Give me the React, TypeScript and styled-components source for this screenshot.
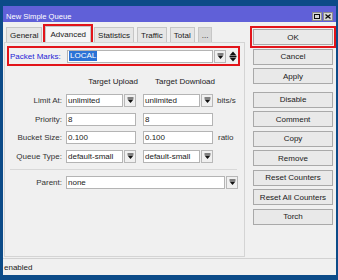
import React, {FC} from 'react';
import styled, {createGlobalStyle} from 'styled-components';

const GlobalStyle = createGlobalStyle`
  html, body {
    margin: 0;
    padding: 0;
  }
  body {
    background: #0c4b88;
    font-family: "Liberation Sans", Arial, sans-serif;
    font-size: 8px;
    color: #1a1a1a;
  }
`

const RED = '#e2141a'

const Desktop = styled.div`
  width: 338px;
  height: 280px;
  box-sizing: border-box;
  padding: 6px 2px 5px 3px;
  background: #0c4b88;
  display: flex;
`

const Window = styled.div`
  flex: 1;
  display: flex;
  flex-direction: column;
  background: #f0f0f0;
  overflow: hidden;
`

const TitleBar = styled.div`
  height: 16px;
  flex: none;
  box-sizing: border-box;
  padding: 2px 3px 0 3px;
  background: #6060d8;
  color: #fff;
  display: flex;
  align-items: center;
  justify-content: space-between;
`

const TitleText = styled.span`
  font-size: 7.6px;
  margin-top: 2px;
`

const TitleButtons = styled.div`
  display: flex;
  gap: 1px;
  margin-top: 2px;
`

const TitleButton = styled.div`
  width: 10px;
  height: 9px;
  box-sizing: border-box;
  background: #d6d6d6;
  border: 1px solid #8c8c8c;
  display: flex;
  align-items: center;
  justify-content: center;
`

const Body = styled.div`
  flex: 1;
  display: flex;
  padding: 4px 3px 1px 1px;
  gap: 8px;
  min-height: 0;
`

const LeftCol = styled.div`
  width: 241px;
  display: flex;
  flex-direction: column;
`

const Tabs = styled.div`
  height: 16px;
  display: flex;
  align-items: flex-end;
  gap: 3px;
  padding-left: 2px;
`

const Tab = styled.div<{$active?: boolean; $muted?: boolean}>`
  height: ${p => p.$active ? 16 : 15}px;
  box-sizing: border-box;
  padding: 0 ${p => p.$active ? 4 : 3}px;
  display: flex;
  align-items: center;
  background: ${p => p.$muted ? '#d8d8d8' : p.$active ? '#f6f6f6' : '#e6e6e6'};
  border: 1px solid #c6c6c6;
  border-bottom: none;
  outline: ${p => p.$active ? `2px solid ${RED}` : 'none'};
  outline-offset: 0;
`

const Panel = styled.div`
  flex: 1;
  border: 1px solid #d4d4d4;
  background: #f0f0f0;
  display: flex;
  flex-direction: column;
  padding: 3px 3px 0 2px;
`

const MarksBox = styled.div`
  height: 20px;
  box-sizing: border-box;
  border: 2px solid ${RED};
  display: flex;
  align-items: center;
  padding-left: 1px;
  margin-right: 1px;
`

const MarksLabel = styled.span`
  width: 57px;
  color: #2424d6;
`

const Input = styled.div<{$w: number}>`
  width: ${p => p.$w}px;
  height: 13px;
  box-sizing: border-box;
  background: #fff;
  border: 1px solid #b4b4b4;
  display: flex;
  align-items: center;
  padding-left: 1px;
  white-space: nowrap;
  overflow: hidden;
`

const Selected = styled.span`
  background: #2b73d6;
  color: #fff;
  padding: 0 1px;
  line-height: 10px;
`

const DropButton = styled.div`
  width: 12px;
  height: 13px;
  box-sizing: border-box;
  margin-left: 1px;
  background: #f0f0f0;
  border: 1px solid #b8b8b8;
  display: flex;
  align-items: center;
  justify-content: center;
`

const SpinButton = styled.div`
  width: 8px;
  height: 13px;
  margin-left: 3px;
  display: flex;
  align-items: center;
  justify-content: center;
`

const HeaderRow = styled.div`
  display: flex;
  height: 10px;
  align-items: center;
  margin-top: 10px;
  padding-left: 61px;
`

const HeaderCell = styled.div<{$gap?: number}>`
  width: 70px;
  text-align: right;
  margin-left: ${p => p.$gap ?? 0}px;
  color: #222;
`

const Form = styled.div`
  display: flex;
  flex-direction: column;
  gap: 5.5px;
  margin-top: 8px;
`

const Row = styled.div`
  display: flex;
  align-items: center;
  height: 13px;
`

const Label = styled.span`
  width: 57px;
  margin-right: 4px;
  margin-left: -2px;
  text-align: right;
  color: #333;
  white-space: nowrap;
`

const Field = styled.div<{$w: number; $gap?: number}>`
  width: ${p => p.$w}px;
  margin-left: ${p => p.$gap ?? 0}px;
  display: flex;
`

const Unit = styled.span<{$gap: number}>`
  margin-left: ${p => p.$gap}px;
  color: #333;
`

const Separator = styled.div`
  height: 1px;
  background: #d8d8d8;
  margin: 6px 4px 6px 3px;
`

const RightCol = styled.div`
  width: 80px;
  display: flex;
  flex-direction: column;
  padding-top: 3px;
  gap: 3.5px;
`

const Button = styled.div<{$outlined?: boolean; $space?: number}>`
  height: 16px;
  box-sizing: border-box;
  border: 1px solid #a9a9a9;
  background: #e9e9e9;
  display: flex;
  align-items: center;
  justify-content: center;
  color: #1a1a1a;
  white-space: nowrap;
  margin-top: ${p => p.$space ?? 0}px;
  outline: ${p => p.$outlined ? `2px solid ${RED}` : 'none'};
  outline-offset: 1px;
`

const StatusBar = styled.div`
  height: 17px;
  flex: none;
  box-sizing: border-box;
  border-top: 1px solid #d2d2d2;
  padding-left: 1px;
  display: flex;
  align-items: center;
  color: #1a1a1a;
`

const DropIcon: FC = () => (
    <svg width="7" height="7" viewBox="0 0 7 7">
        <rect x="0.5" y="0.5" width="6" height="1" fill="#111"/>
        <path d="M0.5 2.5 H6.5 L3.5 6 Z" fill="#111"/>
    </svg>
)

const SpinIcon: FC = () => (
    <svg width="8" height="11" viewBox="0 0 8 11">
        <path d="M4 0.5 L7.5 4.5 H0.5 Z" fill="#111"/>
        <rect x="0.5" y="5" width="7" height="1" fill="#111"/>
        <path d="M0.5 6.5 H7.5 L4 10.5 Z" fill="#111"/>
    </svg>
)

const Select: FC<{w: number; value: string}> = ({w, value}) => (
    <>
        <Input $w={w}>{value}</Input>
        <DropButton><DropIcon/></DropButton>
    </>
)

const buttons = ['OK', 'Cancel', 'Apply', 'Disable', 'Comment', 'Copy', 'Remove', 'Reset Counters', 'Reset All Counters', 'Torch']

const App: FC = () => {
    return (
        <>
            <GlobalStyle/>
            <Desktop>
                <Window>
                    <TitleBar>
                        <TitleText>New Simple Queue</TitleText>
                        <TitleButtons>
                            <TitleButton>
                                <svg width="6" height="5" viewBox="0 0 6 5">
                                    <rect x="0.5" y="0.5" width="5" height="4" fill="none" stroke="#111"/>
                                </svg>
                            </TitleButton>
                            <TitleButton>
                                <svg width="6" height="5" viewBox="0 0 6 5">
                                    <path d="M0.5 0.5 L5.5 4.5 M5.5 0.5 L0.5 4.5" stroke="#111" strokeWidth="1.3"/>
                                </svg>
                            </TitleButton>
                        </TitleButtons>
                    </TitleBar>

                    <Body>
                        <LeftCol>
                            <Tabs>
                                <Tab>General</Tab>
                                <Tab $active>Advanced</Tab>
                                <Tab>Statistics</Tab>
                                <Tab>Traffic</Tab>
                                <Tab>Total</Tab>
                                <Tab $muted>...</Tab>
                            </Tabs>
                            <Panel>
                                <MarksBox>
                                    <MarksLabel>Packet Marks:</MarksLabel>
                                    <Input $w={146}><Selected>LOCAL</Selected></Input>
                                    <DropButton><DropIcon/></DropButton>
                                    <SpinButton><SpinIcon/></SpinButton>
                                </MarksBox>

                                <HeaderRow>
                                    <HeaderCell>Target Upload</HeaderCell>
                                    <HeaderCell $gap={7}>Target Download</HeaderCell>
                                </HeaderRow>

                                <Form>
                                    <Row>
                                        <Label>Limit At:</Label>
                                        <Field $w={70}><Select w={57} value="unlimited"/></Field>
                                        <Field $w={70} $gap={7}><Select w={57} value="unlimited"/></Field>
                                        <Unit $gap={4}>bits/s</Unit>
                                    </Row>
                                    <Row>
                                        <Label>Priority:</Label>
                                        <Field $w={70}><Input $w={70}>8</Input></Field>
                                        <Field $w={70} $gap={7}><Input $w={70}>8</Input></Field>
                                    </Row>
                                    <Row>
                                        <Label>Bucket Size:</Label>
                                        <Field $w={70}><Input $w={70}>0.100</Input></Field>
                                        <Field $w={70} $gap={7}><Input $w={70}>0.100</Input></Field>
                                        <Unit $gap={5}>ratio</Unit>
                                    </Row>
                                    <Row>
                                        <Label>Queue Type:</Label>
                                        <Field $w={70}><Select w={57} value="default-small"/></Field>
                                        <Field $w={70} $gap={7}><Select w={57} value="default-small"/></Field>
                                    </Row>
                                </Form>

                                <Separator/>

                                <Row>
                                    <Label>Parent:</Label>
                                    <Field $w={172}><Select w={159} value="none"/></Field>
                                </Row>
                            </Panel>
                        </LeftCol>

                        <RightCol>
                            {buttons.map((b, i) => (
                                <Button key={b} $outlined={i === 0} $space={b === 'Disable' ? 4 : 0}>{b}</Button>
                            ))}
                        </RightCol>
                    </Body>

                    <StatusBar>enabled</StatusBar>
                </Window>
            </Desktop>
        </>
    );
}

export default App
